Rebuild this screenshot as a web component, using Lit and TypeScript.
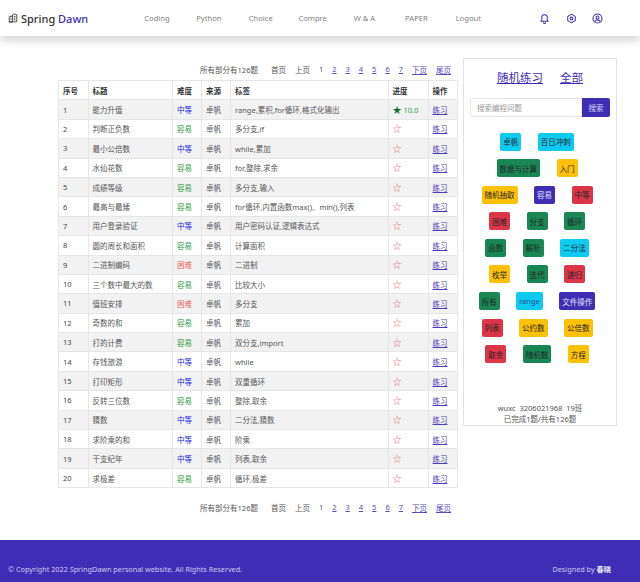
import { LitElement, html, css, svg } from 'lit';
import { customElement } from 'lit/decorators.js';

const NAV = ['Coding', 'Python', 'Choice', 'Compre', 'W & A', 'PAPER', 'Logout'];

type Level = 'mid' | 'easy' | 'hard';
const LEVEL_TEXT: Record<Level, string> = { mid: '中等', easy: '容易', hard: '困难' };

const ROWS: [string, Level, string][] = [
  ['能力升值', 'mid', 'range,累积,for循环,格式化输出'],
  ['判断正负数', 'easy', '多分支,if'],
  ['最小公倍数', 'mid', 'while,累加'],
  ['水仙花数', 'easy', 'for,整除,求余'],
  ['成绩等级', 'easy', '多分支,输入'],
  ['最高与最矮', 'easy', 'for循环,内置函数max()、min(),列表'],
  ['用户登录验证', 'mid', '用户密码认证,逻辑表达式'],
  ['圆的周长和面积', 'easy', '计算面积'],
  ['二进制编码', 'hard', '二进制'],
  ['三个数中最大的数', 'easy', '比较大小'],
  ['值班安排', 'hard', '多分支'],
  ['奇数的和', 'easy', '累加'],
  ['打的计费', 'easy', '双分支,import'],
  ['存钱旅游', 'mid', 'while'],
  ['打印矩形', 'mid', '双重循环'],
  ['反转三位数', 'easy', '整除,取余'],
  ['猜数', 'mid', '二分法,猜数'],
  ['求阶乘的和', 'mid', '阶乘'],
  ['干支纪年', 'mid', '列表,取余'],
  ['求极差', 'easy', '循环,极差'],
];

const TAGS: [string, string][][] = [
  [['卓帆', 'cyan'], ['百日冲刺', 'cyan']],
  [['数据与计算', 'green'], ['入门', 'yellow']],
  [['随机抽取', 'yellow'], ['容易', 'indigo'], ['中等', 'red']],
  [['困难', 'red'], ['分支', 'green'], ['循环', 'green']],
  [['函数', 'green'], ['解析', 'green'], ['二分法', 'cyan']],
  [['枚举', 'yellow'], ['迭代', 'green'], ['递归', 'red']],
  [['所有', 'green'], ['range', 'cyan blue-text'], ['文件操作', 'indigo']],
  [['列表', 'red'], ['公约数', 'yellow'], ['公倍数', 'yellow']],
  [['取余', 'red'], ['随机数', 'green'], ['方程', 'yellow']],
];

const icon = (body: unknown, size = 11) => html`<svg viewBox="0 0 24 24" width=${size} height=${size} fill="none" stroke="currentColor" stroke-width="2.2" stroke-linecap="round" stroke-linejoin="round">${body}</svg>`;

@customElement('app-root')
export class AppRoot extends LitElement {
  static styles = css`
    :host {
      display: block;
      height: 582px;
      position: relative;
      background: #fff;
      overflow: hidden;
      font-family: "Noto Sans", "Noto Sans CJK SC", sans-serif;
      font-size: 7.5px;
      color: #555;
    }

    a {
      color: #3f2db5;
      text-decoration: underline;
    }

    header {
      height: 36px;
      display: flex;
      align-items: center;
      background: #fff;
      box-shadow: 0 3px 12px rgba(0, 0, 0, 0.22);
    }

    .logo {
      width: 131px;
      padding-left: 8px;
      box-sizing: border-box;
      display: flex;
      align-items: center;
      gap: 3px;
      font-size: 11px;
      font-weight: 500;
      color: #333;
    }

    .logo svg {
      color: #444;
      flex: none;
    }

    .logo span {
      color: #3f2db5;
    }

    nav {
      display: flex;
    }

    nav div {
      width: 51.9px;
      text-align: center;
      font-size: 7.6px;
      color: #808080;
    }

    .icons {
      display: flex;
      gap: 15.5px;
      margin-left: 45px;
      color: #3f2db5;
    }

    .icons svg {
      display: block;
    }

    main {
      display: flex;
      align-items: flex-start;
      gap: 6px;
      padding: 22px 0 0 58px;
    }

    .left {
      width: 399px;
    }

    .pager {
      height: 22px;
      display: flex;
      align-items: center;
      justify-content: flex-end;
      padding-right: 6px;
      gap: 9px;
      color: #555;
    }

    .pager .total {
      margin-right: 4px;
    }

    .pager a {
      color: #5a4cc0;
    }

    table {
      width: 399px;
      table-layout: fixed;
      border-collapse: collapse;
      border: 1px solid #e4e6e8;
      margin-bottom: 8px;
    }

    col:nth-child(1) { width: 29.5px; }
    col:nth-child(2) { width: 84.5px; }
    col:nth-child(3) { width: 29px; }
    col:nth-child(4) { width: 29px; }
    col:nth-child(5) { width: 157.5px; }
    col:nth-child(6) { width: 40px; }
    col:nth-child(7) { width: 29.5px; }

    th, td {
      height: 19.4px;
      padding: 0 4px;
      border: 1px solid #e4e6e8;
      box-sizing: border-box;
      text-align: left;
      font-weight: 400;
      white-space: nowrap;
      overflow: hidden;
    }

    th {
      font-weight: 700;
      color: #333;
    }

    td:first-child {
      color: #444;
    }

    tbody tr:nth-child(odd) {
      background: #f2f2f2;
    }

    .mid { color: #1a1ae0; }
    .easy { color: #2e9e45; }
    .hard { color: #ee5a5a; }

    .star {
      color: #e4666e;
      font-size: 9px;
    }

    .done {
      color: #28a745;
    }

    .done b {
      color: #146c2e;
      font-weight: 400;
      font-size: 9px;
    }

    td a {
      color: #4a3cba;
    }

    aside {
      width: 154px;
      height: 368px;
      box-sizing: border-box;
      border: 1px solid #e2e2e2;
      padding: 10px 6px 0;
      display: flex;
      flex-direction: column;
    }

    .title {
      display: flex;
      justify-content: center;
      gap: 17px;
      font-size: 11.5px;
      line-height: 18px;
    }

    .search {
      display: flex;
      height: 19px;
      margin: 11px 0 15.5px;
    }

    .search .input {
      flex: 1;
      display: flex;
      align-items: center;
      padding-left: 6px;
      border: 1px solid #e6e6e6;
      border-radius: 2px 0 0 2px;
      color: #9a9a9a;
    }

    .search .btn {
      width: 28px;
      display: flex;
      align-items: center;
      justify-content: center;
      background: #3f2db5;
      color: #d8d4f2;
      border-radius: 0 2px 2px 0;
    }

    .tags {
      display: flex;
      flex-direction: column;
      gap: 8.6px;
      padding-right: 6px;
    }

    .tag-row {
      display: flex;
      justify-content: center;
      gap: 16.5px;
    }

    .tag {
      height: 18px;
      padding: 0 3px;
      display: flex;
      align-items: center;
      border-radius: 2px;
      font-size: 7.5px;
      color: #212529;
    }

    .cyan { background: #0dcaf0; }
    .green { background: #198754; }
    .yellow { background: #ffc107; }
    .red { background: #dc3545; }
    .indigo { background: #3f2db5; color: #e4e1f6; }
    .blue-text { color: #1d4f91; }

    .user {
      margin-top: auto;
      text-align: center;
      line-height: 11px;
      color: #555;
      white-space: pre;
    }

    footer {
      position: absolute;
      left: 0;
      right: 0;
      bottom: 0;
      height: 42px;
      box-sizing: border-box;
      padding: 22px 29px 0 8px;
      display: flex;
      justify-content: space-between;
      background: #3f2db5;
      color: #cfcbec;
      font-size: 7.25px;
      line-height: 14px;
    }

    footer b {
      color: #f0eefa;
    }
  `;

  private _pager() {
    return html`
      <div class="pager">
        <span class="total">所有部分有126题</span>
        <span>首页</span>
        <span>上页</span>
        <span>1</span>
        ${[2, 3, 4, 5, 6, 7].map((n) => html`<a href="#">${n}</a>`)}
        <a href="#">下页</a>
        <a href="#">尾页</a>
      </div>
    `;
  }

  render() {
    return html`
      <header>
        <div class="logo">
          ${icon(svg`<path d="M3 21V9l8-2v14zM3 21h18V4l-7-2-3 2v3M7 12h1M7 16h1M15 8h2M15 12h2M15 16h2"/>`, 10)}
          <div>Spring <span>Dawn</span></div>
        </div>
        <nav>${NAV.map((n) => html`<div>${n}</div>`)}</nav>
        <div class="icons">
          ${icon(svg`<path d="M6 17V10a6 6 0 0 1 12 0v7l2 1H4zM10 21a2 2 0 0 0 4 0"/>`)}
          ${icon(svg`<path d="M12 2.500l8.200 4.750v9.500L12 21.500l-8.200-4.750v-9.500z"/><circle cx="12" cy="12" r="3"/>`)}
          ${icon(svg`<circle cx="12" cy="12" r="10"/><circle cx="12" cy="10" r="3.200"/><path d="M6.500 19c1-3 3-4 5.500-4s4.500 1 5.500 4"/>`)}
        </div>
      </header>
      <main>
        <div class="left">
          ${this._pager()}
          <table>
            <colgroup><col /><col /><col /><col /><col /><col /><col /></colgroup>
            <thead>
              <tr>
                ${['序号', '标题', '难度', '来源', '标签', '进度', '操作'].map((h) => html`<th>${h}</th>`)}
              </tr>
            </thead>
            <tbody>
              ${ROWS.map(([title, level, tags], i) => html`
                <tr>
                  <td>${i + 1}</td>
                  <td>${title}</td>
                  <td class=${level}>${LEVEL_TEXT[level]}</td>
                  <td>卓帆</td>
                  <td>${tags}</td>
                  ${i === 0
                    ? html`<td class="done"><b>★</b> 10.0</td>`
                    : html`<td class="star">☆</td>`}
                  <td><a href="#">练习</a></td>
                </tr>
              `)}
            </tbody>
          </table>
          ${this._pager()}
        </div>
        <aside>
          <div class="title"><a href="#">随机练习</a><a href="#">全部</a></div>
          <div class="search">
            <div class="input">搜索编程问题</div>
            <div class="btn">搜索</div>
          </div>
          <div class="tags">
            ${TAGS.map((row) => html`
              <div class="tag-row">
                ${row.map(([t, c]) => html`<div class="tag ${c}">${t}</div>`)}
              </div>
            `)}
          </div>
          <div class="user">wuxc  3206021968  19班
已完成1题/共有126题</div>
        </aside>
      </main>
      <footer>
        <div>© Copyright 2022 SpringDawn personal website. All Rights Reserved.</div>
        <div>Designed by <b>春晓</b></div>
      </footer>
    `;
  }
}
